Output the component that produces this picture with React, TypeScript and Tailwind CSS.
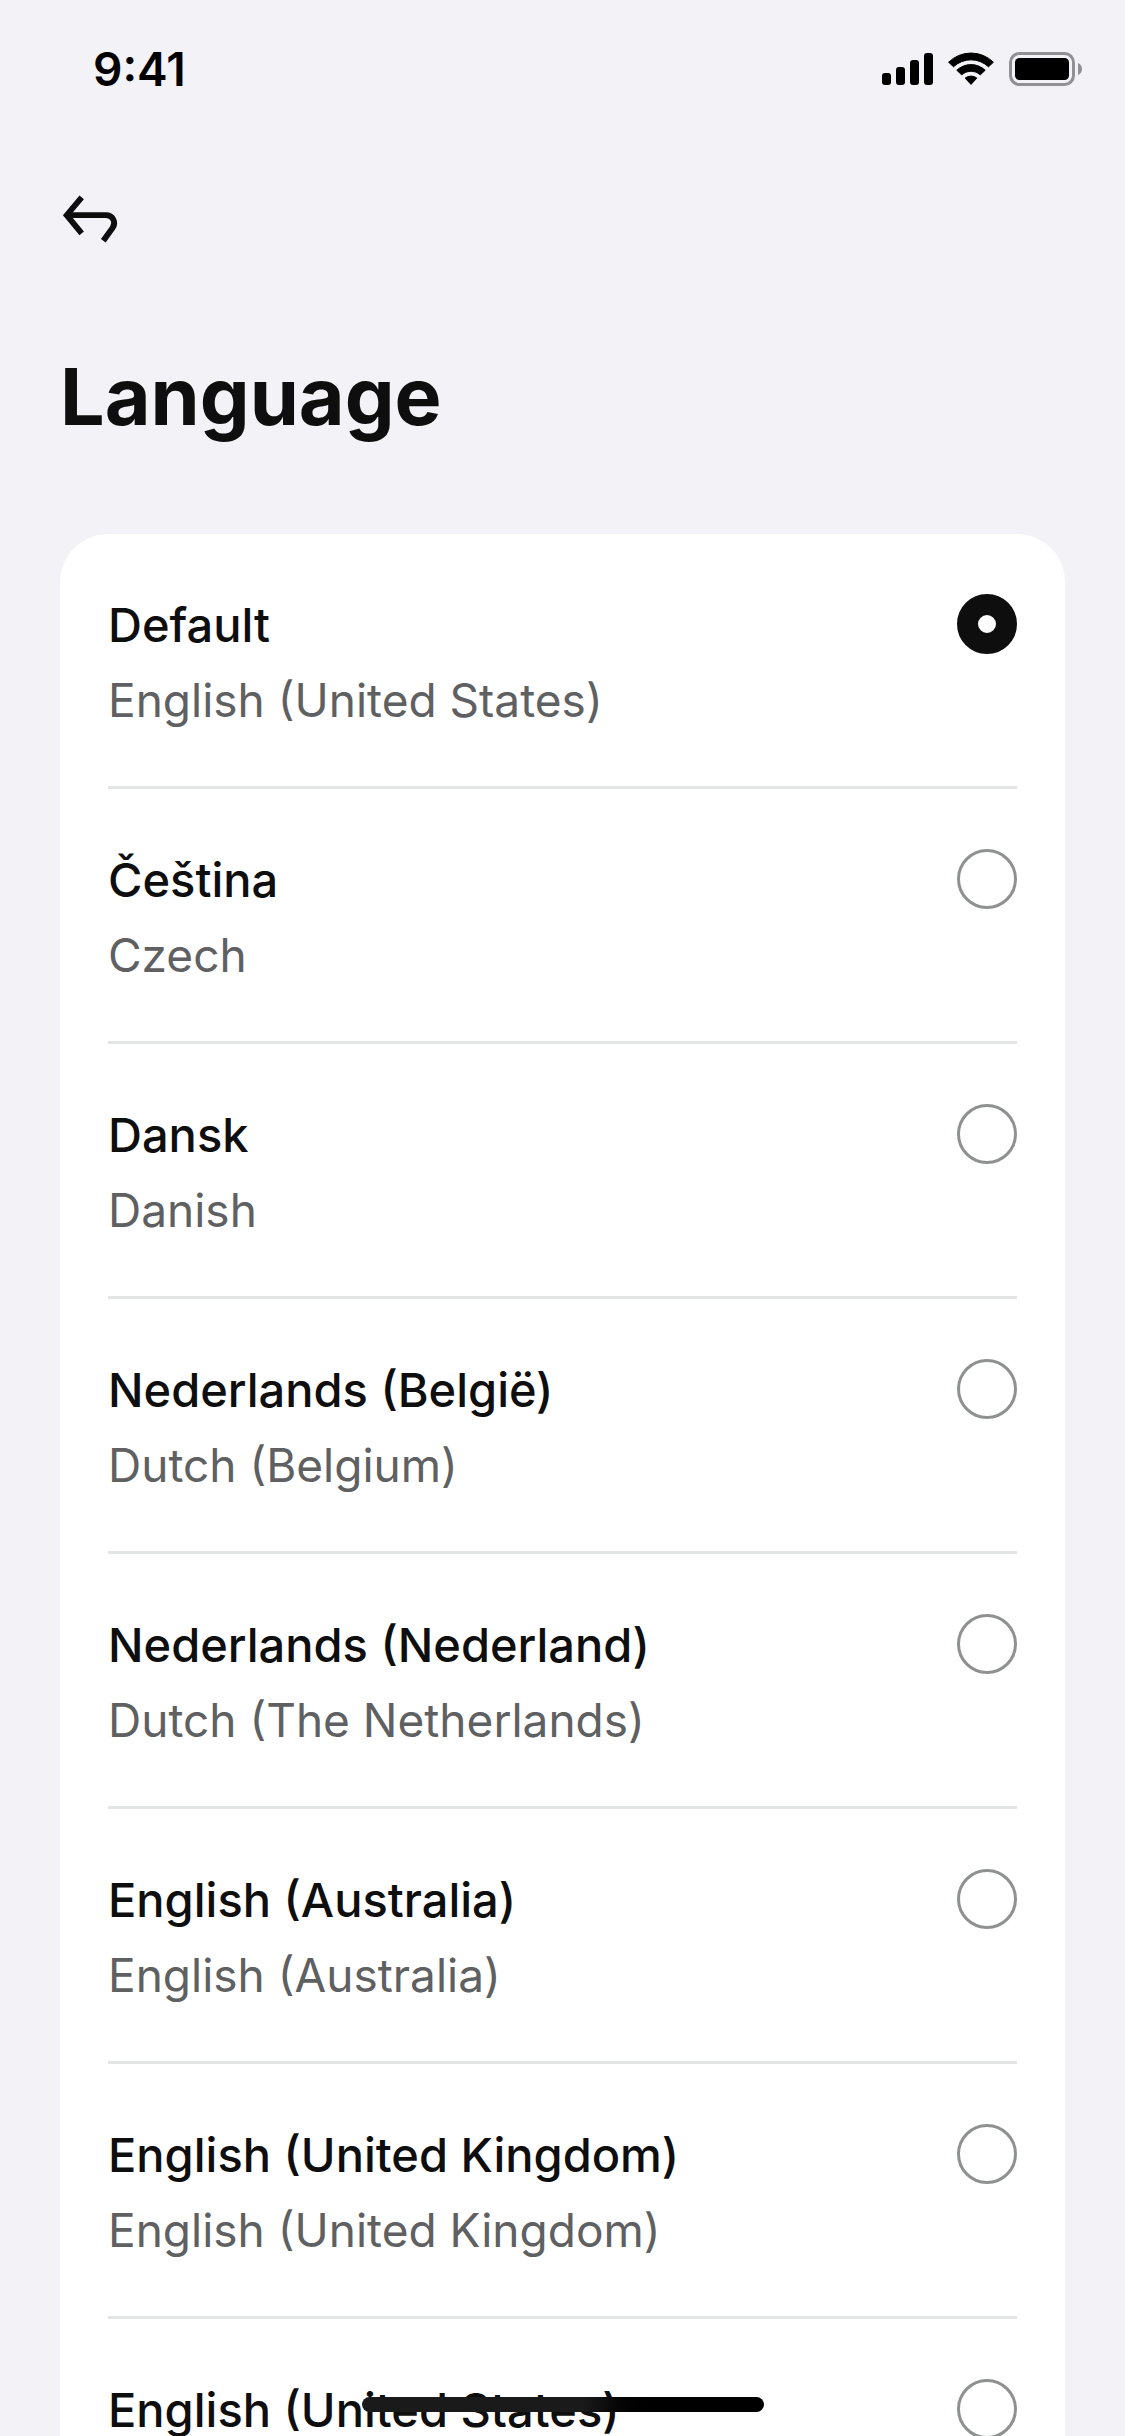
import { useState } from "react";

type Language = {
  id: string;
  label: string;
  description: string;
};

const LANGUAGES: Language[] = [
  { id: "default", label: "Default", description: "English (United States)" },
  { id: "cs", label: "Čeština", description: "Czech" },
  { id: "da", label: "Dansk", description: "Danish" },
  { id: "nl-BE", label: "Nederlands (België)", description: "Dutch (Belgium)" },
  {
    id: "nl-NL",
    label: "Nederlands (Nederland)",
    description: "Dutch (The Netherlands)",
  },
  {
    id: "en-AU",
    label: "English (Australia)",
    description: "English (Australia)",
  },
  {
    id: "en-GB",
    label: "English (United Kingdom)",
    description: "English (United Kingdom)",
  },
  {
    id: "en-US",
    label: "English (United States)",
    description: "English (United States)",
  },
];

const SignalIcon = () => (
  <svg width="51" height="34" viewBox="0 0 51 34" aria-hidden="true">
    <rect x="0" y="21" width="9" height="12" rx="3" />
    <rect x="14" y="15" width="9" height="18" rx="3" />
    <rect x="28" y="8" width="9" height="25" rx="3" />
    <rect x="42" y="1" width="9" height="32" rx="3" />
  </svg>
);

const WifiIcon = () => (
  <svg width="46" height="34" viewBox="0 0 46 34" aria-hidden="true">
    <g stroke="black" strokeWidth="1" strokeLinejoin="round">
      <path d="M.6 10.2A32 32 0 0 1 45.4 10.2L40.5 14.8A25.5 25.5 0 0 0 5.5 14.8Z" />
      <path d="M8.8 18.2A20.8 20.8 0 0 1 37.2 18.2L32.4 22.8A14 14 0 0 0 13.6 22.8Z" />
      <path d="M17.1 26.1A9.6 9.6 0 0 1 28.9 26.1L23 32.4Z" />
    </g>
  </svg>
);

const BatteryIcon = () => (
  <svg width="73" height="34" viewBox="0 0 73 34" aria-hidden="true">
    <rect
      x="1.5"
      y="1.5"
      width="63"
      height="31"
      rx="9"
      fill="none"
      stroke="#919095"
      strokeWidth="3"
    />
    <rect x="6" y="6" width="54" height="22" rx="4.5" />
    <path d="M69 11C71.5 12 73 14.3 73 17S71.5 22 69 23Z" fill="#919095" />
  </svg>
);

const BackIcon = () => (
  <svg
    width="60"
    height="60"
    viewBox="0 0 60 60"
    fill="none"
    stroke="#0e0e0e"
    strokeWidth="5.8"
    aria-hidden="true"
  >
    <path d="M21.7 8.3 6.7 26.2 21.7 44.3" />
    <path d="M7 26.2H46C52.8 26.2 56.6 33.4 52.5 39L43.3 51.7" />
  </svg>
);

const StatusBar = () => (
  <div className="flex h-[138px] shrink-0 items-center justify-between pr-[43px] pl-[93px]">
    <span className="text-[46px] font-semibold text-black">9:41</span>
    <div className="flex items-center gap-[15px]">
      <SignalIcon />
      <WifiIcon />
      <BatteryIcon />
    </div>
  </div>
);

type LanguageRowProps = {
  language: Language;
  checked: boolean;
  onSelect: () => void;
};

const LanguageRow = ({ language, checked, onSelect }: LanguageRowProps) => (
  <li className="border-b-[3px] border-[#e3e4e4] pt-[60px] pb-[55px] last:border-b-0">
    <label className="flex items-start justify-between leading-[62px]">
      <span className="flex flex-col gap-[13px]">
        <span className="text-[47px] font-medium text-[#0e0e0e]">
          {language.label}
        </span>
        <span className="text-[46px] text-[#5f6061]">
          {language.description}
        </span>
      </span>
      <input
        type="radio"
        name="language"
        value={language.id}
        checked={checked}
        onChange={onSelect}
        className="size-[60px] shrink-0 appearance-none rounded-full border-[3px] border-[#8f9191] bg-white checked:border-[21px] checked:border-[#0e0e0e]"
      />
    </label>
  </li>
);

export default function App() {
  const [selected, setSelected] = useState("default");

  return (
    <div className="relative flex h-screen flex-col overflow-hidden bg-[#f2f2f7] font-['Inter',sans-serif]">
      <StatusBar />

      <main className="min-h-0 flex-1 overflow-y-auto px-[60px] pt-[51px] [scrollbar-width:none]">
        <button type="button" aria-label="Back" className="block">
          <BackIcon />
        </button>

        <h1 className="mt-[99px] mb-[90px] text-[79px] leading-[96px] font-bold text-[#0e0e0e]">
          Language
        </h1>

        <ul className="rounded-[48px] bg-white px-12">
          {LANGUAGES.map((language) => (
            <LanguageRow
              key={language.id}
              language={language}
              checked={language.id === selected}
              onSelect={() => setSelected(language.id)}
            />
          ))}
        </ul>
      </main>

      {/* home indicator */}
      <div className="pointer-events-none absolute inset-x-0 bottom-6 flex justify-center">
        <div className="h-[15px] w-[402px] rounded-full bg-linear-to-r from-[#1a1a1a] from-55% to-black to-75%" />
      </div>
    </div>
  );
}
